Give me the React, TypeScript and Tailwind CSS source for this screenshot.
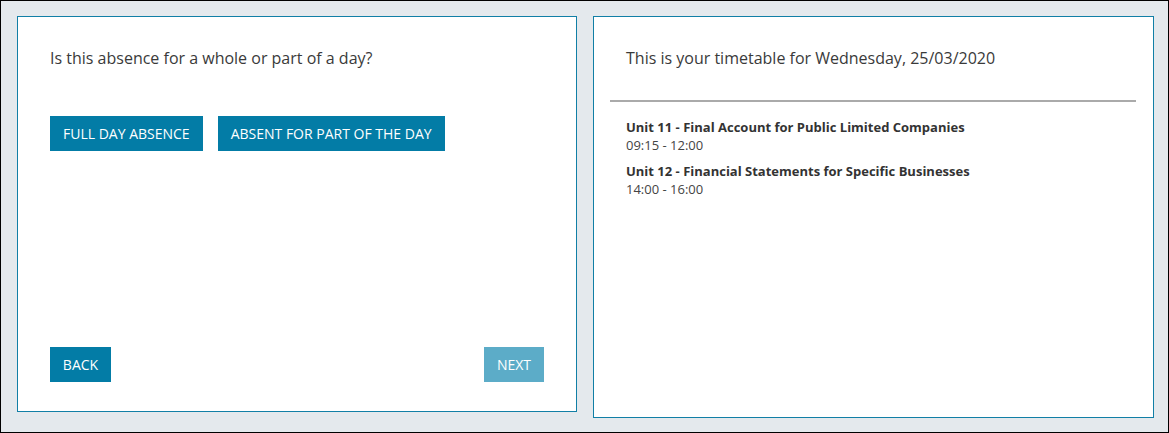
const font = { fontFamily: '"Open Sans", "Liberation Sans", sans-serif' };

export default function App() {
  return (
    <div
      className="w-[1169px] h-[433px] border border-black bg-[#e4e9ed] flex gap-[16px] pl-[16px] pt-[15px] items-start text-[#333]"
      style={font}
    >
      {/* Left: absence question */}
      <div className="w-[560px] h-[396px] bg-white border border-[#117fa6] flex flex-col pl-[32px] pr-[32px] pt-[31px] pb-[29px]">
        <p className="text-[16px] leading-[20px] text-[#3a3a3a]">Is this absence for a whole or part of a day?</p>
        <div className="flex gap-[15px] mt-[48px]">
          <button className="h-[35px] px-[13px] bg-[#037ca6] text-white text-[14px] uppercase">Full Day Absence</button>
          <button className="h-[35px] px-[13px] bg-[#037ca6] text-white text-[14px] uppercase">Absent for part of the day</button>
        </div>
        <div className="mt-auto flex justify-between">
          <button className="h-[35px] w-[61px] bg-[#037ca6] text-white text-[14px] uppercase">Back</button>
          <button className="h-[35px] w-[60px] bg-[#5cacc8] text-white text-[14px] uppercase">Next</button>
        </div>
      </div>

      {/* Right: timetable */}
      <div className="w-[561px] h-[402px] bg-white border border-[#117fa6] pl-[16px] pr-[17px] pt-[31px]">
        <p className="pl-[16px] text-[16px] leading-[20px] text-[#3a3a3a]">This is your timetable for Wednesday, 25/03/2020</p>
        <div className="mt-[32px] h-[2px] bg-[#aaaaaa]" />
        <div className="pl-[16px] pt-[16px] flex flex-col gap-[8px] text-[13px] leading-[18px]">
          <div>
            <div className="font-bold text-[#333]">Unit 11 - Final Account for Public Limited Companies</div>
            <div className="text-[#444]">09:15 - 12:00</div>
          </div>
          <div>
            <div className="font-bold text-[#333]">Unit 12 - Financial Statements for Specific Businesses</div>
            <div className="text-[#444]">14:00 - 16:00</div>
          </div>
        </div>
      </div>
    </div>
  );
}
